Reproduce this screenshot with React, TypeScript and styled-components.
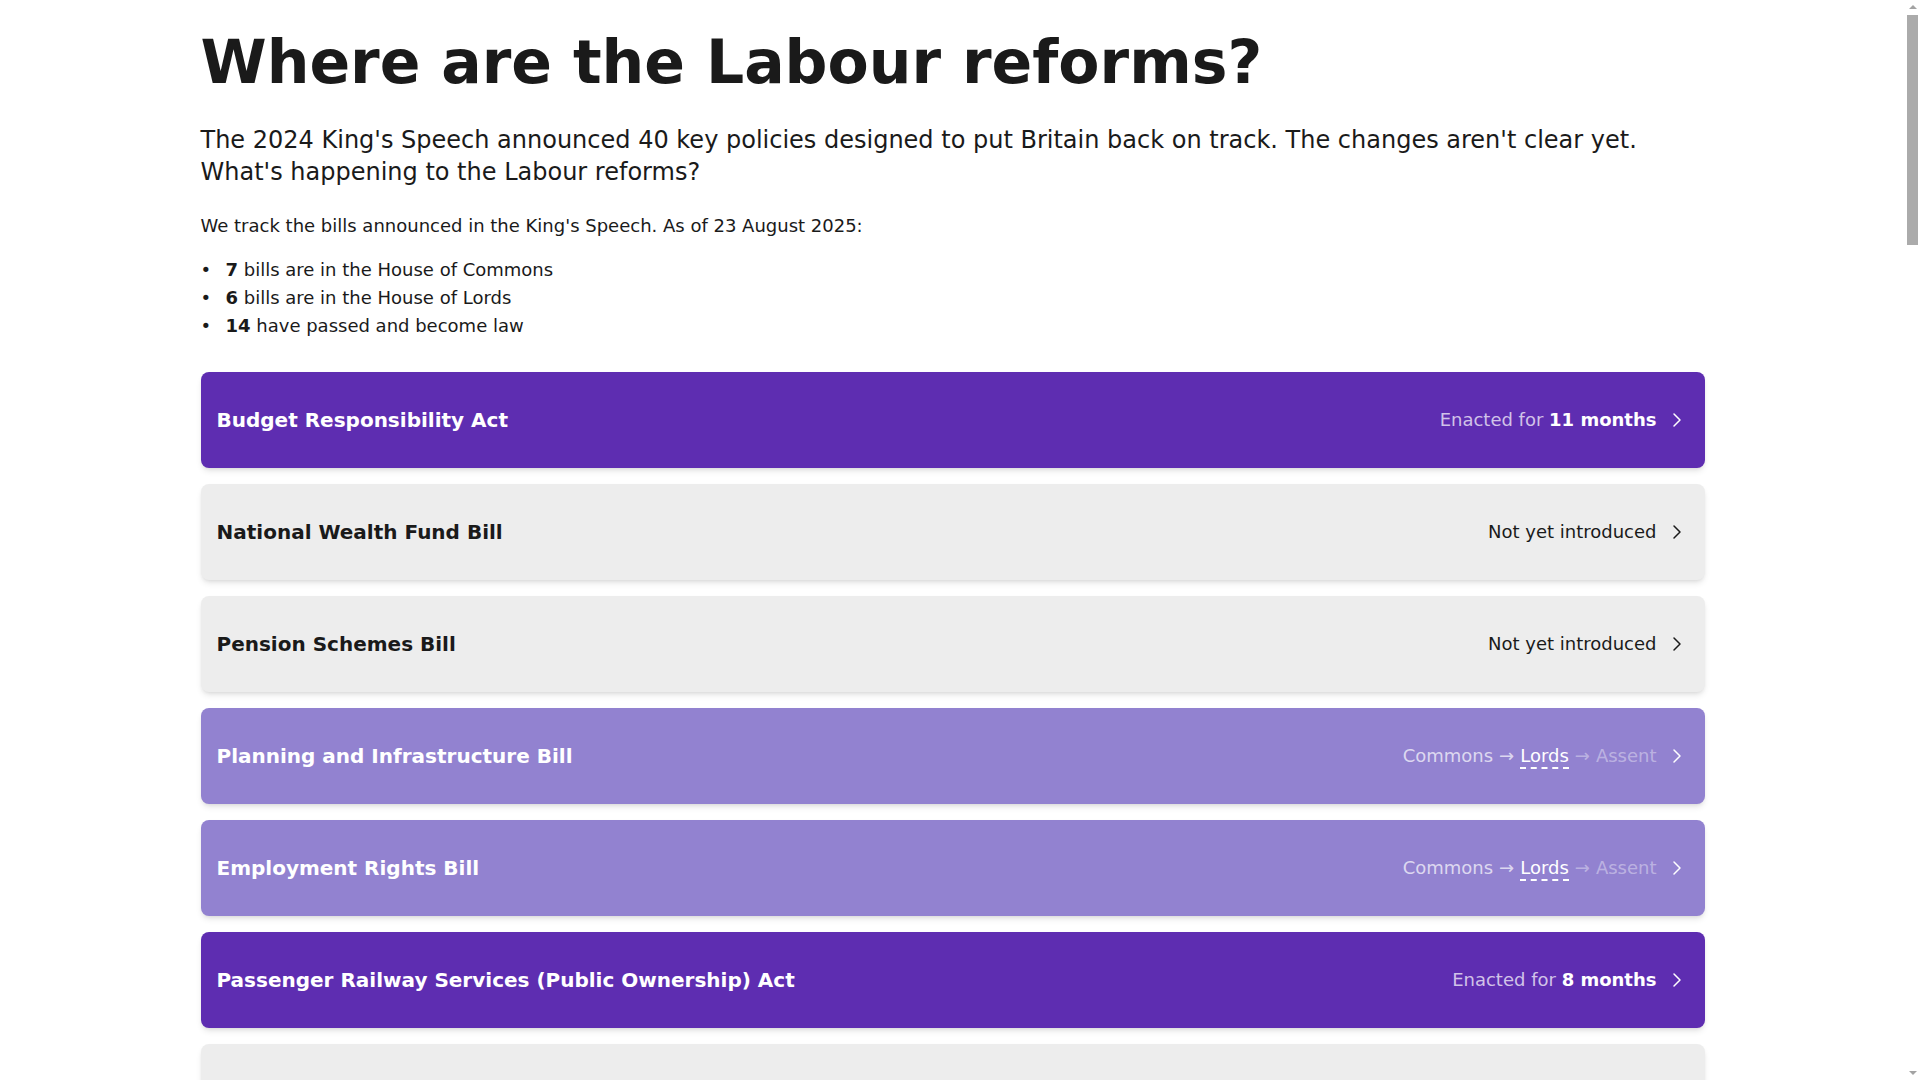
import React from "react";
import styled, { createGlobalStyle } from "styled-components";
import { ChevronRight } from "lucide-react";

const GlobalStyle = createGlobalStyle`
  html, body {
    margin: 0;
    padding: 0;
    height: 100%;
    background: #ffffff;
  }
  #root { height: 100%; }
  body {
    font-family: "DejaVu Sans", "Liberation Sans", sans-serif;
    color: #1a1a1a;
    overflow: hidden;
  }
  * { box-sizing: border-box; }
`;

type Status =
  | { kind: "enacted"; months: number }
  | { kind: "none" }
  | { kind: "commons" }
  | { kind: "lords" };

type Bill = { name: string; status: Status };

const bills: Bill[] = [
  { name: "Budget Responsibility Act", status: { kind: "enacted", months: 11 } },
  { name: "National Wealth Fund Bill", status: { kind: "none" } },
  { name: "Pension Schemes Bill", status: { kind: "none" } },
  { name: "Planning and Infrastructure Bill", status: { kind: "lords" } },
  { name: "Employment Rights Bill", status: { kind: "lords" } },
  { name: "Passenger Railway Services (Public Ownership) Act", status: { kind: "enacted", months: 8 } },
  { name: "Railways Bill", status: { kind: "none" } },
  { name: "Great British Energy Act", status: { kind: "enacted", months: 3 } },
  { name: "Crown Estate Act", status: { kind: "enacted", months: 4 } },
  { name: "Border Security, Asylum and Immigration Bill", status: { kind: "lords" } },
  { name: "Renters' Rights Bill", status: { kind: "lords" } },
  { name: "Children's Wellbeing and Schools Bill", status: { kind: "lords" } },
  { name: "Skills England Bill", status: { kind: "none" } },
  { name: "Water (Special Measures) Act", status: { kind: "enacted", months: 4 } },
  { name: "Football Governance Bill", status: { kind: "commons" } },
  { name: "Terrorism (Protection of Premises) Act", status: { kind: "enacted", months: 4 } },
  { name: "Crime and Policing Bill", status: { kind: "lords" } },
  { name: "Public Office (Accountability) Bill", status: { kind: "none" } },
  { name: "Victims, Courts and Public Protection Bill", status: { kind: "commons" } },
  { name: "English Devolution Bill", status: { kind: "commons" } },
  { name: "Tobacco and Vapes Bill", status: { kind: "lords" } },
  { name: "Mental Health Bill", status: { kind: "commons" } },
  { name: "Leasehold and Commonhold Reform Bill", status: { kind: "none" } },
  { name: "Draft Conversion Practices Bill", status: { kind: "none" } },
  { name: "Cyber Security and Resilience Bill", status: { kind: "none" } },
  { name: "Data (Use and Access) Act", status: { kind: "enacted", months: 2 } },
  { name: "Product Regulation and Metrology Act", status: { kind: "enacted", months: 2 } },
  { name: "Arbitration Act", status: { kind: "enacted", months: 10 } },
  { name: "Bank Resolution (Recapitalisation) Act", status: { kind: "enacted", months: 3 } },
  { name: "House of Lords (Hereditary Peers) Bill", status: { kind: "commons" } },
  { name: "Armed Forces Commissioner Act", status: { kind: "enacted", months: 1 } },
  { name: "Holocaust Memorial Bill", status: { kind: "commons" } },
  { name: "Northern Ireland Troubles Bill", status: { kind: "none" } },
  { name: "Equality (Race and Disability) Bill", status: { kind: "none" } },
  { name: "Sustainable Aviation Fuel Bill", status: { kind: "commons" } },
  { name: "Audit Reform and Corporate Governance Bill", status: { kind: "none" } },
  { name: "Hillsborough Law", status: { kind: "commons" } },
  { name: "Non-Domestic Rating (Multipliers and Private Schools) Act", status: { kind: "enacted", months: 5 } },
  { name: "Courts and Tribunals Bill", status: { kind: "none" } },
  { name: "Digital Information and Smart Data Act", status: { kind: "enacted", months: 2 } },
];

/* Scrolling area; the right 15px is the scrollbar gutter. */
const Viewport = styled.div`
  height: 100vh;
  overflow-y: auto;
  padding-right: 15px;
`;

/* Scrollbar indicator, drawn over the gutter. */
const ScrollTrack = styled.div`
  position: fixed;
  top: 0;
  right: 0;
  width: 15px;
  height: 100vh;
  background: #ffffff;
  display: flex;
  flex-direction: column;
  align-items: center;
  pointer-events: none;
`;

const ScrollArrow = styled.div<{ $down?: boolean }>`
  flex: 0 0 15px;
  width: 0;
  height: 0;
  border-left: 4px solid transparent;
  border-right: 4px solid transparent;
  ${(p) =>
    p.$down
      ? "border-top: 4px solid #a3a3a3; margin-top: auto; flex-basis: auto; margin-bottom: 5px;"
      : "border-bottom: 4px solid #a3a3a3; flex-basis: auto; margin-top: 5px; margin-bottom: 6px;"}
`;

const ScrollThumb = styled.div`
  width: 11px;
  height: 230px;
  background: #ababab;
`;

const Page = styled.main`
  max-width: 1536px;
  margin: 0 auto;
  padding: 32px 16px 48px;
`;

const Title = styled.h1`
  margin: 0;
  font-size: 60px;
  line-height: 1;
  font-weight: 700;
  color: #1a1a1a;
`;

const Lead = styled.p`
  margin: 32px 0 0;
  font-size: 24px;
  line-height: 32px;
  color: #1a1a1a;
`;

const Intro = styled.p`
  margin: 24px 0 0;
  font-size: 18px;
  line-height: 28px;
`;

const Stats = styled.ul`
  margin: 16px 0 0;
  padding: 0;
  list-style: none;
  font-size: 18px;
  line-height: 28px;
`;

const Stat = styled.li`
  display: flex;

  &::before {
    content: "•";
    flex: 0 0 25px;
  }
`;

const StatText = styled.span``;

const BillList = styled.div`
  margin-top: 32px;
  display: flex;
  flex-direction: column;
  gap: 16px;
`;

type Tone = "enacted" | "progress" | "idle";

const tones: Record<Tone, { bg: string; fg: string }> = {
  enacted: { bg: "#5e2db1", fg: "#ffffff" },
  progress: { bg: "#9282d0", fg: "#ffffff" },
  idle: { bg: "#ededed", fg: "#1a1a1a" },
};

const Card = styled.a<{ $tone: Tone }>`
  display: flex;
  align-items: center;
  justify-content: space-between;
  height: 96px;
  padding: 0 16px;
  border-radius: 8px;
  background: ${(p) => tones[p.$tone].bg};
  color: ${(p) => tones[p.$tone].fg};
  text-decoration: none;
  box-shadow: 0 4px 6px -1px rgba(0, 0, 0, 0.1), 0 2px 4px -2px rgba(0, 0, 0, 0.1);
`;

const BillName = styled.span`
  font-size: 20px;
  font-weight: 700;
  line-height: 28px;
`;

const StatusArea = styled.span`
  display: flex;
  align-items: center;
  gap: 8px;
  font-size: 18px;
  line-height: 28px;
`;

const Muted = styled.span`
  color: rgba(255, 255, 255, 0.72);
`;

const Strong = styled.strong`
  font-weight: 700;
  color: #ffffff;
`;

const Stage = styled.span<{ $state: "done" | "current" | "todo" }>`
  color: ${(p) =>
    p.$state === "current"
      ? "#ffffff"
      : p.$state === "done"
      ? "rgba(255,255,255,0.7)"
      : "rgba(255,255,255,0.4)"};
  ${(p) =>
    p.$state === "current"
      ? "border-bottom: 2px dashed #ffffff; line-height: 22px; display: inline-block;"
      : ""}
`;

const Arrow = styled.span<{ $faded?: boolean }>`
  color: ${(p) => (p.$faded ? "rgba(255,255,255,0.4)" : "rgba(255,255,255,0.7)")};
  margin: 0 6px;
`;

function StatusText({ status }: { status: Status }) {
  if (status.kind === "enacted") {
    return (
      <span>
        <Muted>Enacted for </Muted>
        <Strong>{status.months} months</Strong>
      </span>
    );
  }
  if (status.kind === "none") {
    return <span>Not yet introduced</span>;
  }
  const inLords = status.kind === "lords";
  return (
    <span>
      <Stage $state={inLords ? "done" : "current"}>Commons</Stage>
      <Arrow $faded={!inLords}>→</Arrow>
      <Stage $state={inLords ? "current" : "todo"}>Lords</Stage>
      <Arrow $faded>→</Arrow>
      <Stage $state="todo">Assent</Stage>
    </span>
  );
}

function toneFor(status: Status): Tone {
  if (status.kind === "enacted") return "enacted";
  if (status.kind === "none") return "idle";
  return "progress";
}

export default function App() {
  return (
    <>
      <GlobalStyle />
      <Viewport>
        <Page>
          <Title>Where are the Labour reforms?</Title>
          <Lead>
            The 2024 King's Speech announced 40 key policies designed to put Britain back on track. The
            changes aren't clear yet. What's happening to the Labour reforms?
          </Lead>
          <Intro>We track the bills announced in the King's Speech. As of 23 August 2025:</Intro>
          <Stats>
            <Stat>
              <StatText>
                <strong>7</strong> bills are in the House of Commons
              </StatText>
            </Stat>
            <Stat>
              <StatText>
                <strong>6</strong> bills are in the House of Lords
              </StatText>
            </Stat>
            <Stat>
              <StatText>
                <strong>14</strong> have passed and become law
              </StatText>
            </Stat>
          </Stats>
          <BillList>
            {bills.map((b) => (
              <Card key={b.name} href="#" $tone={toneFor(b.status)}>
                <BillName>{b.name}</BillName>
                <StatusArea>
                  <StatusText status={b.status} />
                  <ChevronRight size={24} strokeWidth={1.5} />
                </StatusArea>
              </Card>
            ))}
          </BillList>
        </Page>
      </Viewport>
      <ScrollTrack aria-hidden>
        <ScrollArrow />
        <ScrollThumb />
        <ScrollArrow $down />
      </ScrollTrack>
    </>
  );
}
